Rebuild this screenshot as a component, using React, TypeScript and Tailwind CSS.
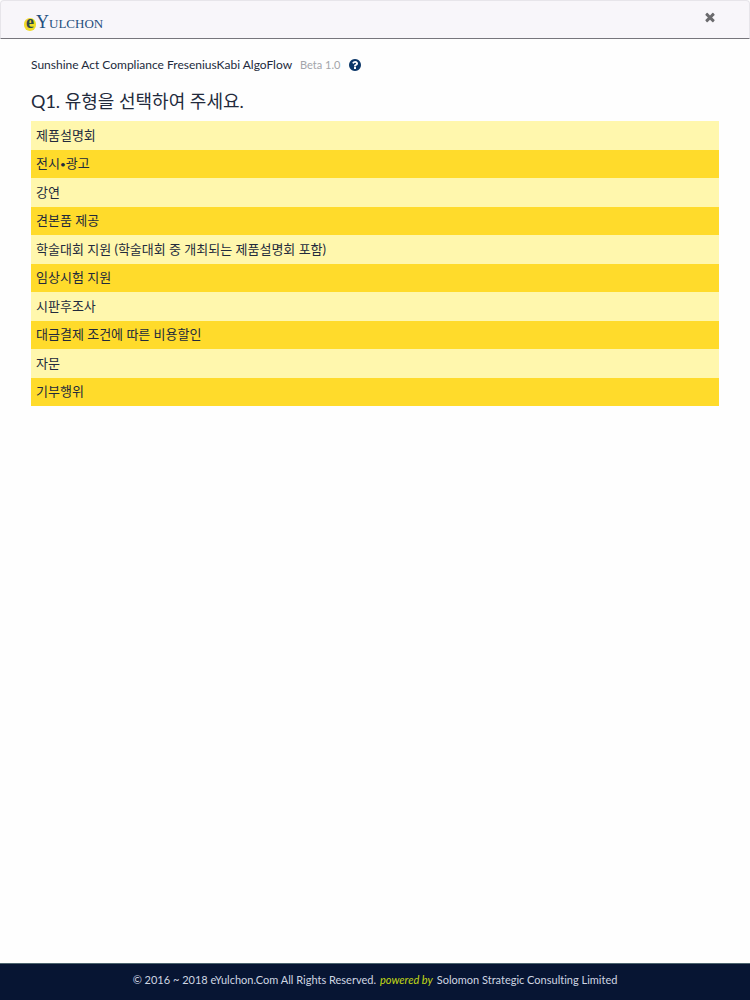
import React, { useState } from 'react';

const OPTIONS = [
  { id: 'presentation', label: '제품설명회' },
  { id: 'exhibition', label: <>전시<span className="text-[10px] leading-none">•</span>광고</> },
  { id: 'lecture', label: '강연' },
  { id: 'sample', label: '견본품 제공' },
  { id: 'conference', label: '학술대회 지원 (학술대회 중 개최되는 제품설명회 포함)' },
  { id: 'trial', label: '임상시험 지원' },
  { id: 'survey', label: '시판후조사' },
  { id: 'discount', label: '대금결제 조건에 따른 비용할인' },
  { id: 'advice', label: '자문' },
  { id: 'donation', label: '기부행위' },
];

function CloseIcon() {
  return (
    <svg viewBox="0 0 1792 1792" className="w-[14px] h-[14px] fill-current" aria-hidden="true">
      <path d="M1490 1322q0 40-28 68l-136 136q-28 28-68 28t-68-28l-294-294-294 294q-28 28-68 28t-68-28l-136-136q-28-28-28-68t28-68l294-294-294-294q-28-28-28-68t28-68l136-136q28-28 68-28t68 28l294 294 294-294q28-28 68-28t68 28l136 136q28 28 28 68t-28 68l-294 294 294 294q28 28 28 68z" />
    </svg>
  );
}

function HelpIcon() {
  return (
    <svg viewBox="0 0 1792 1792" className="w-[14px] h-[14px] fill-current" aria-hidden="true">
      <path d="M1024 1376v-192q0-14-9-23t-23-9h-192q-14 0-23 9t-9 23v192q0 14 9 23t23 9h192q14 0 23-9t9-23zm256-672q0-88-55.5-163t-138.5-116-170-41q-243 0-371 213-15 24 8 42l132 100q7 6 19 6 16 0 25-12 53-68 86-92 34-24 86-24 48 0 85.5 26t37.5 59q0 38-20 61t-68 45q-63 28-115.5 86.5t-52.5 125.5v36q0 14 9 23t23 9h192q14 0 23-9t9-23q0-19 21.5-49.5t54.5-49.5q32-18 49-28.5t46-35 44.5-48 28-60.5 12.5-81zm384 192q0 209-103 385.5t-279.5 279.5-385.5 103-385.5-103-279.5-279.5-103-385.5 103-385.5 279.5-279.5 385.5-103 385.5 103 279.5 279.5 103 385.5z" />
    </svg>
  );
}

function Logo() {
  return (
    <a href="#" aria-label="eYulchon" className="flex items-baseline font-['Liberation_Serif',serif] text-[#1f4e7e] leading-none">
      <span className="flex items-center justify-center w-3 h-[13px] rounded-full bg-[#f0dc28] text-[18px] font-bold text-[#2f4a48] pb-1">e</span>
      <span className="text-[18px]">Y</span>
      <span className="text-[13px]">ULCHON</span>
    </a>
  );
}

export default function App() {
  const [selected, setSelected] = useState<string | null>(null);

  return (
    <div className="min-h-screen flex flex-col bg-[#fefefe] text-[#222a3c] font-['Lato','Noto_Sans_CJK_KR',sans-serif] [font-variant-ligatures:none]">
      <header className="flex justify-between h-[39px] pl-[23px] pr-8 rounded-t-[4px] border border-[#e7e5ea] border-b-[#77757c] bg-[#f8f6fa]">
        <div className="flex items-center pt-[5px]">
          <Logo />
        </div>
        <button type="button" aria-label="닫기" className="self-start mt-[9px] text-[#6b6b6e] cursor-pointer">
          <CloseIcon />
        </button>
      </header>

      <main className="flex-1 px-[31px] pt-4">
        <div className="flex items-center gap-2 h-5 text-[12px]">
          <h1>Sunshine Act Compliance FreseniusKabi AlgoFlow</h1>
          <span className="text-[11px] text-[#a3a5aa]">Beta 1.0</span>
          <button type="button" aria-label="도움말" className="text-[#0b3768] cursor-pointer">
            <HelpIcon />
          </button>
        </div>

        <h2 className="mt-[11px] mb-[5px] text-[18px] leading-[30px]">Q1. 유형을 선택하여 주세요.</h2>

        <ul className="text-[13px]">
          {OPTIONS.map(({ id, label }) => (
            <li key={id} className="h-[29px] even:h-[28px] bg-[#fff7ad] even:bg-[#ffdb2b]">
              <button
                type="button"
                aria-pressed={selected === id}
                onClick={() => setSelected(id)}
                className="block w-full h-full px-[5px] text-left cursor-pointer"
              >
                {label}
              </button>
            </li>
          ))}
        </ul>
      </main>

      <footer className="flex items-center justify-center gap-1 h-[37px] pb-[3px] border-t border-[#4c646e] bg-[#071533] text-[11px] text-[#cfd5e2]">
        <span>© 2016 ~ 2018 eYulchon.Com All Rights Reserved.</span>
        <em className="text-[#c3d916]">powered by</em>
        <span>Solomon Strategic Consulting Limited</span>
      </footer>
    </div>
  );
}
